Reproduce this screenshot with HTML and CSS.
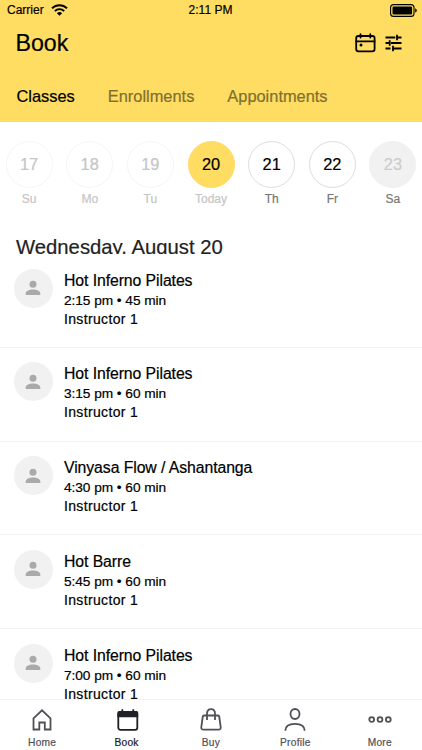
FILE: index.html
```html
<!DOCTYPE html>
<html lang="en">
<head>
<meta charset="utf-8">
<title>Book</title>
<link rel="stylesheet" href="styles.css">
</head>
<body>
<svg class="defs" width="0" height="0">
  <symbol id="person" viewBox="0 0 16 16"><circle cx="8" cy="4.2" r="3.5"/><path d="M.7 15v-1.500C.7 10.900 4.600 9.500 8 9.500s7.300 1.400 7.300 4V15z"/></symbol>
</svg>
<div class="app">
  <header class="header">
    <div class="status">
      <div class="carrier"><span>Carrier</span>
        <svg class="wifi" width="17" height="12" viewBox="0 0 17 12"><g fill="none" stroke="#000" stroke-width="1.900"><path d="M1 4.300a10.700 10.700 0 0 1 15 0"/><path d="M3.800 7.100a6.700 6.700 0 0 1 9.400 0"/></g><path d="M8.500 11.800 5.900 9.200a3.700 3.700 0 0 1 5.200 0z"/></svg>
      </div>
      <span class="clock">2:11 PM</span>
      <svg class="battery" width="28" height="13" viewBox="0 0 28 13"><rect x=".6" y=".6" width="23.400" height="11.800" rx="3" fill="none" stroke="#000" stroke-width="1.100"/><rect x="2.500" y="2.500" width="19.600" height="8" rx="1.200"/><path d="M25.200 4.300q1.600.7 1.600 2.200t-1.600 2.200z"/></svg>
    </div>
    <div class="titlebar">
      <h1>Book</h1>
      <div class="actions">
        <svg width="21" height="20" viewBox="0 0 21 20" fill="none" stroke="#000" stroke-width="1.800" stroke-linecap="round"><rect x="1.200" y="3" width="18.400" height="15.300" rx="2.300"/><path d="M1.200 8.300h18.400M5.500 1.200v3.400M15.300 1.200v3.400"/><circle cx="6" cy="12" r="1.500" fill="#000" stroke="none"/></svg>
        <svg width="17" height="18" viewBox="0 0 17 18" fill="none" stroke="#000" stroke-width="1.800"><path d="M.5 3.500h9.800M12 3.500h4.500M12 .7v5.600M.5 9h4M6 9h10.500M4.700 6.300v5.400M.5 14.500h5M8 14.500h8.500M8 11.800v5.400"/></svg>
      </div>
    </div>
    <nav class="tabs"><a class="active">Classes</a><a>Enrollments</a><a>Appointments</a></nav>
  </header>
  <section class="days">
    <div class="day past"><b>17</b><span>Su</span></div>
    <div class="day past"><b>18</b><span>Mo</span></div>
    <div class="day past"><b>19</b><span>Tu</span></div>
    <div class="day today"><b>20</b><span>Today</span></div>
    <div class="day"><b>21</b><span>Th</span></div>
    <div class="day"><b>22</b><span>Fr</span></div>
    <div class="day closed"><b>23</b><span>Sa</span></div>
  </section>
  <h2>Wednesday, August 20</h2>
  <main class="list">
    <article class="row"><div class="avatar"><svg width="16" height="16"><use href="#person"/></svg></div><div class="info"><h3>Hot Inferno Pilates</h3><p class="time">2:15 pm • 45 min</p><p class="teacher">Instructor 1</p></div></article>
    <article class="row"><div class="avatar"><svg width="16" height="16"><use href="#person"/></svg></div><div class="info"><h3>Hot Inferno Pilates</h3><p class="time">3:15 pm • 60 min</p><p class="teacher">Instructor 1</p></div></article>
    <article class="row"><div class="avatar"><svg width="16" height="16"><use href="#person"/></svg></div><div class="info"><h3>Vinyasa Flow / Ashantanga</h3><p class="time">4:30 pm • 60 min</p><p class="teacher">Instructor 1</p></div></article>
    <article class="row"><div class="avatar"><svg width="16" height="16"><use href="#person"/></svg></div><div class="info"><h3>Hot Barre</h3><p class="time">5:45 pm • 60 min</p><p class="teacher">Instructor 1</p></div></article>
    <article class="row"><div class="avatar"><svg width="16" height="16"><use href="#person"/></svg></div><div class="info"><h3>Hot Inferno Pilates</h3><p class="time">7:00 pm • 60 min</p><p class="teacher">Instructor 1</p></div></article>
  </main>
  <nav class="bottom">
    <a><svg viewBox="0 0 24 24"><path d="M3.500 10.300 12 2.300l8.500 8v11.200h-5.700v-7H9.300v7H3.500z"/></svg><span>Home</span></a>
    <a class="selected"><svg viewBox="0 0 24 24"><rect x="3.300" y="4" width="19" height="17.800" rx="2"/><path d="M4.300 3h17q1.900 0 1.900 2v4.200H2.400V5q0-2 1.900-2z" fill="currentColor" stroke="none"/><path d="M7.300 1.300V5M18.300 1.300V5"/></svg><span>Book</span></a>
    <a><svg viewBox="0 0 24 24"><path d="M5 7.500h14q1 0 1.200 1l1.500 10.500q.3 2.700-2.200 2.700h-15Q2 21.700 2.300 19L3.800 8.500q.2-1 1.200-1zM8 12V5.800q0-4.600 4-4.600t4 4.600V12"/></svg><span>Buy</span></a>
    <a><svg viewBox="0 0 24 24"><ellipse cx="12" cy="6" rx="4.500" ry="5"/><path d="M2.300 22.800C2.300 18 6 15.800 12 15.800s9.700 2.200 9.700 7"/></svg><span>Profile</span></a>
    <a><svg viewBox="0 0 24 24"><circle cx="3.700" cy="11.500" r="2.400"/><circle cx="12" cy="11.500" r="2.400"/><circle cx="20.300" cy="11.500" r="2.400"/></svg><span>More</span></a>
  </nav>
</div>
</body>
</html>
```
FILE: styles.css
```css
* { box-sizing: border-box; margin: 0; padding: 0; }
body { width: 422px; height: 750px; overflow: hidden; background: #fff; color: #000; font-family: "Liberation Sans", Arial, sans-serif; -webkit-text-stroke: .2px currentColor; }
.defs { position: absolute; }
svg { display: block; flex: none; }
h1, h2, h3, b { font-weight: 400; }
.app { height: 750px; display: flex; flex-direction: column; }
.header { height: 122px; flex: none; background: #ffdc62; }
.status { height: 20px; display: grid; grid-template-columns: 1fr auto 1fr; align-items: center; padding: 0 4px 0 7px; font-size: 12px; line-height: 20px; }
.carrier { display: flex; align-items: center; gap: 7px; }
.clock { margin-left: -2px; margin-right: 2px; }
.battery { justify-self: end; }
.titlebar { height: 46px; display: flex; justify-content: space-between; align-items: center; padding: 0 20px 0 15.500px; }
h1 { font-size: 23.200px; line-height: 28px; margin-top: -1px; }
.actions { display: flex; align-items: center; gap: 9px; }
.tabs { display: flex; gap: 33px; padding: 20px 16px 0 16.500px; font-size: 16.400px; line-height: 20px; color: #80702f; }
.tabs .active { color: #000; }
.days { height: 105px; flex: none; display: flex; padding: 19px 0 0 5.600px; gap: 13.650px; }
.day { width: 47px; flex: none; text-align: center; font-size: 12px; color: #777; }
.day b { display: flex; align-items: center; justify-content: center; width: 47px; height: 47px; border: 1px solid #ddd; border-radius: 50%; font-size: 16.400px; color: #000; }
.day span { display: block; line-height: 14px; margin-top: 4px; }
.past, .today { color: #c5c5c5; }
.past b { color: #c5c5c5; border-color: #f5f5f5; }
.today b { background: #ffdc62; border-color: #ffdc62; }
.closed b { background: #f1f1f1; border-color: #f1f1f1; color: #ccc; }
h2 { height: 27px; flex: none; overflow: hidden; padding: 8px 0 0 16px; font-size: 20.300px; line-height: 24px; color: #222; white-space: nowrap; }
.list { flex: 1; min-height: 0; overflow: hidden; }
.row { height: 93.750px; display: flex; gap: 11.300px; padding: 14.500px 14px 0 13.700px; border-bottom: 1px solid #f1f1f1; }
.avatar { width: 39px; height: 39px; flex: none; border-radius: 50%; display: flex; align-items: center; justify-content: center; background: #f1f1f1; color: #aaa; }
.avatar svg { fill: currentColor; }
h3 { font-size: 15.800px; line-height: 22px; margin-top: 1px; letter-spacing: -.08px; }
.time { font-size: 13.700px; line-height: 18px; letter-spacing: -.05px; }
.teacher { font-size: 14px; line-height: 19px; letter-spacing: .35px; }
.bottom { height: 51px; flex: none; display: grid; grid-template-columns: repeat(5, 1fr); border-top: 1px solid #f1f1f1; background: #fff; }
.bottom a { display: flex; flex-direction: column; align-items: center; color: #505057; padding-top: 8px; }
.bottom svg { width: 24px; height: 24px; fill: none; stroke: currentColor; stroke-width: 1.800; }
.bottom span { font-size: 10.200px; line-height: 12px; letter-spacing: .25px; margin-top: 5px; }
.bottom .selected { color: #202026; }
```
